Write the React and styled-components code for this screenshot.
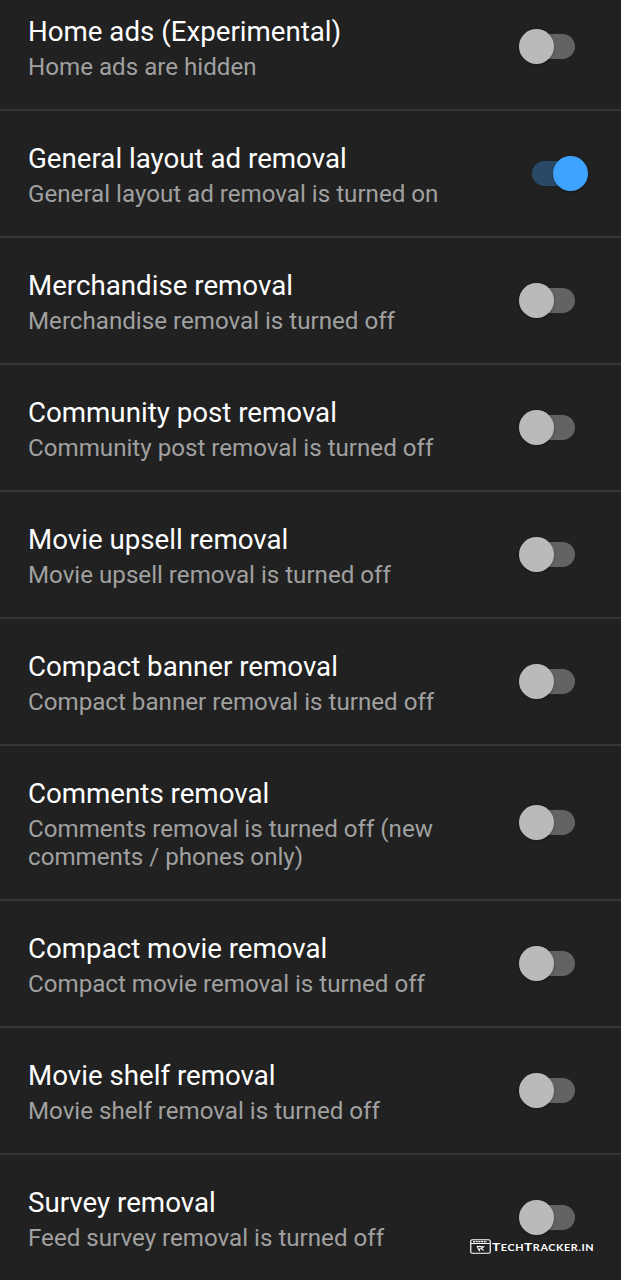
import React from 'react';
import styled, { createGlobalStyle } from 'styled-components';

const Global = createGlobalStyle`
  body { margin: 0; background: #212121; font-family: Roboto, sans-serif; }
`;
const Screen = styled.main`
  position: relative;
  width: 621px;
  height: 1280px;
  overflow: hidden;
  background: #212121;
`;
const List = styled.div`
  margin-top: -16px;
`;
const Row = styled.section`
  box-sizing: border-box;
  min-height: 127px;
  padding: 30px 46px 28px 28px;
  border-bottom: 2px solid #363636;
  display: flex;
  justify-content: space-between;
  &:last-of-type { border-bottom-color: transparent; }
`;
const Copy = styled.div`
  width: 440px;
`;
const Title = styled.div`
  font-size: 27.7px;
  line-height: 36px;
  color: #fff;
  white-space: nowrap;
`;
const Summary = styled.div`
  font-size: 24.15px;
  line-height: 28px;
  padding-top: 3px;
  color: #a0a0a0;
  white-space: pre-line;
`;
const Track = styled.div`
  align-self: center;
  width: 43px;
  height: 25px;
  margin-bottom: 2px;
  border-radius: 13px;
  background: ${p => (p.$on ? '#294a66' : '#636363')};
  display: flex;
  align-items: center;
  justify-content: ${p => (p.$on ? 'flex-end' : 'flex-start')};
`;
const Thumb = styled.div`
  flex: none;
  width: 35px;
  height: 35px;
  border-radius: 50%;
  margin: 0 -13px;
  background: ${p => (p.$on ? '#3ea2ff' : '#bababa')};
  box-shadow: 0 1px 3px rgba(0, 0, 0, 0.3);
`;
const Mark = styled.div`
  position: absolute;
  left: 470px;
  top: 1237px;
  display: flex;
  align-items: center;
  gap: 1px;
  color: #fff;
  svg { flex: none; }
`;
const MarkText = styled.span`
  font: 700 9.5px/16px Lato, sans-serif;
  letter-spacing: 0.5px;
  white-space: nowrap;
  padding-top: 2px;
  transform: scaleX(1.14);
  transform-origin: left;
`;
const Cap = styled.span`
  font-size: 12px;
`;

const rows = [
  ['Home ads (Experimental)', 'Home ads are hidden'],
  ['General layout ad removal', 'General layout ad removal is turned on', true],
  ['Merchandise removal', 'Merchandise removal is turned off'],
  ['Community post removal', 'Community post removal is turned off'],
  ['Movie upsell removal', 'Movie upsell removal is turned off'],
  ['Compact banner removal', 'Compact banner removal is turned off'],
  ['Comments removal', 'Comments removal is turned off (new\ncomments / phones only)'],
  ['Compact movie removal', 'Compact movie removal is turned off'],
  ['Movie shelf removal', 'Movie shelf removal is turned off'],
  ['Survey removal', 'Feed survey removal is turned off'],
];

export default function App() {
  return (
    <Screen>
      <Global />
      <List>
        {rows.map(([title, summary, on]) => (
          <Row key={title}>
            <Copy>
              <Title>{title}</Title>
              <Summary>{summary}</Summary>
            </Copy>
            <Track $on={on}><Thumb $on={on} /></Track>
          </Row>
        ))}
      </List>
      <Mark>
        <svg width="21" height="15" viewBox="0 0 21 15" fill="none" stroke="#fff">
          <rect x="0.75" y="0.75" width="19.5" height="13.5" rx="1.5" strokeWidth="1.2" />
          <path d="M1 4.5H20" strokeWidth="1" />
          <path d="M3 2.6H17" strokeWidth="1.2" strokeDasharray="2 0.7" />
          <path d="M7 7.3l6.5 0.6-2.2 1.3 2.2 2.3M7 7.3l2.3 4.2 1-2.2" strokeWidth="1.1" />
        </svg>
        <MarkText><Cap>T</Cap>ECH<Cap>T</Cap>RACKER.IN</MarkText>
      </Mark>
    </Screen>
  );
}
